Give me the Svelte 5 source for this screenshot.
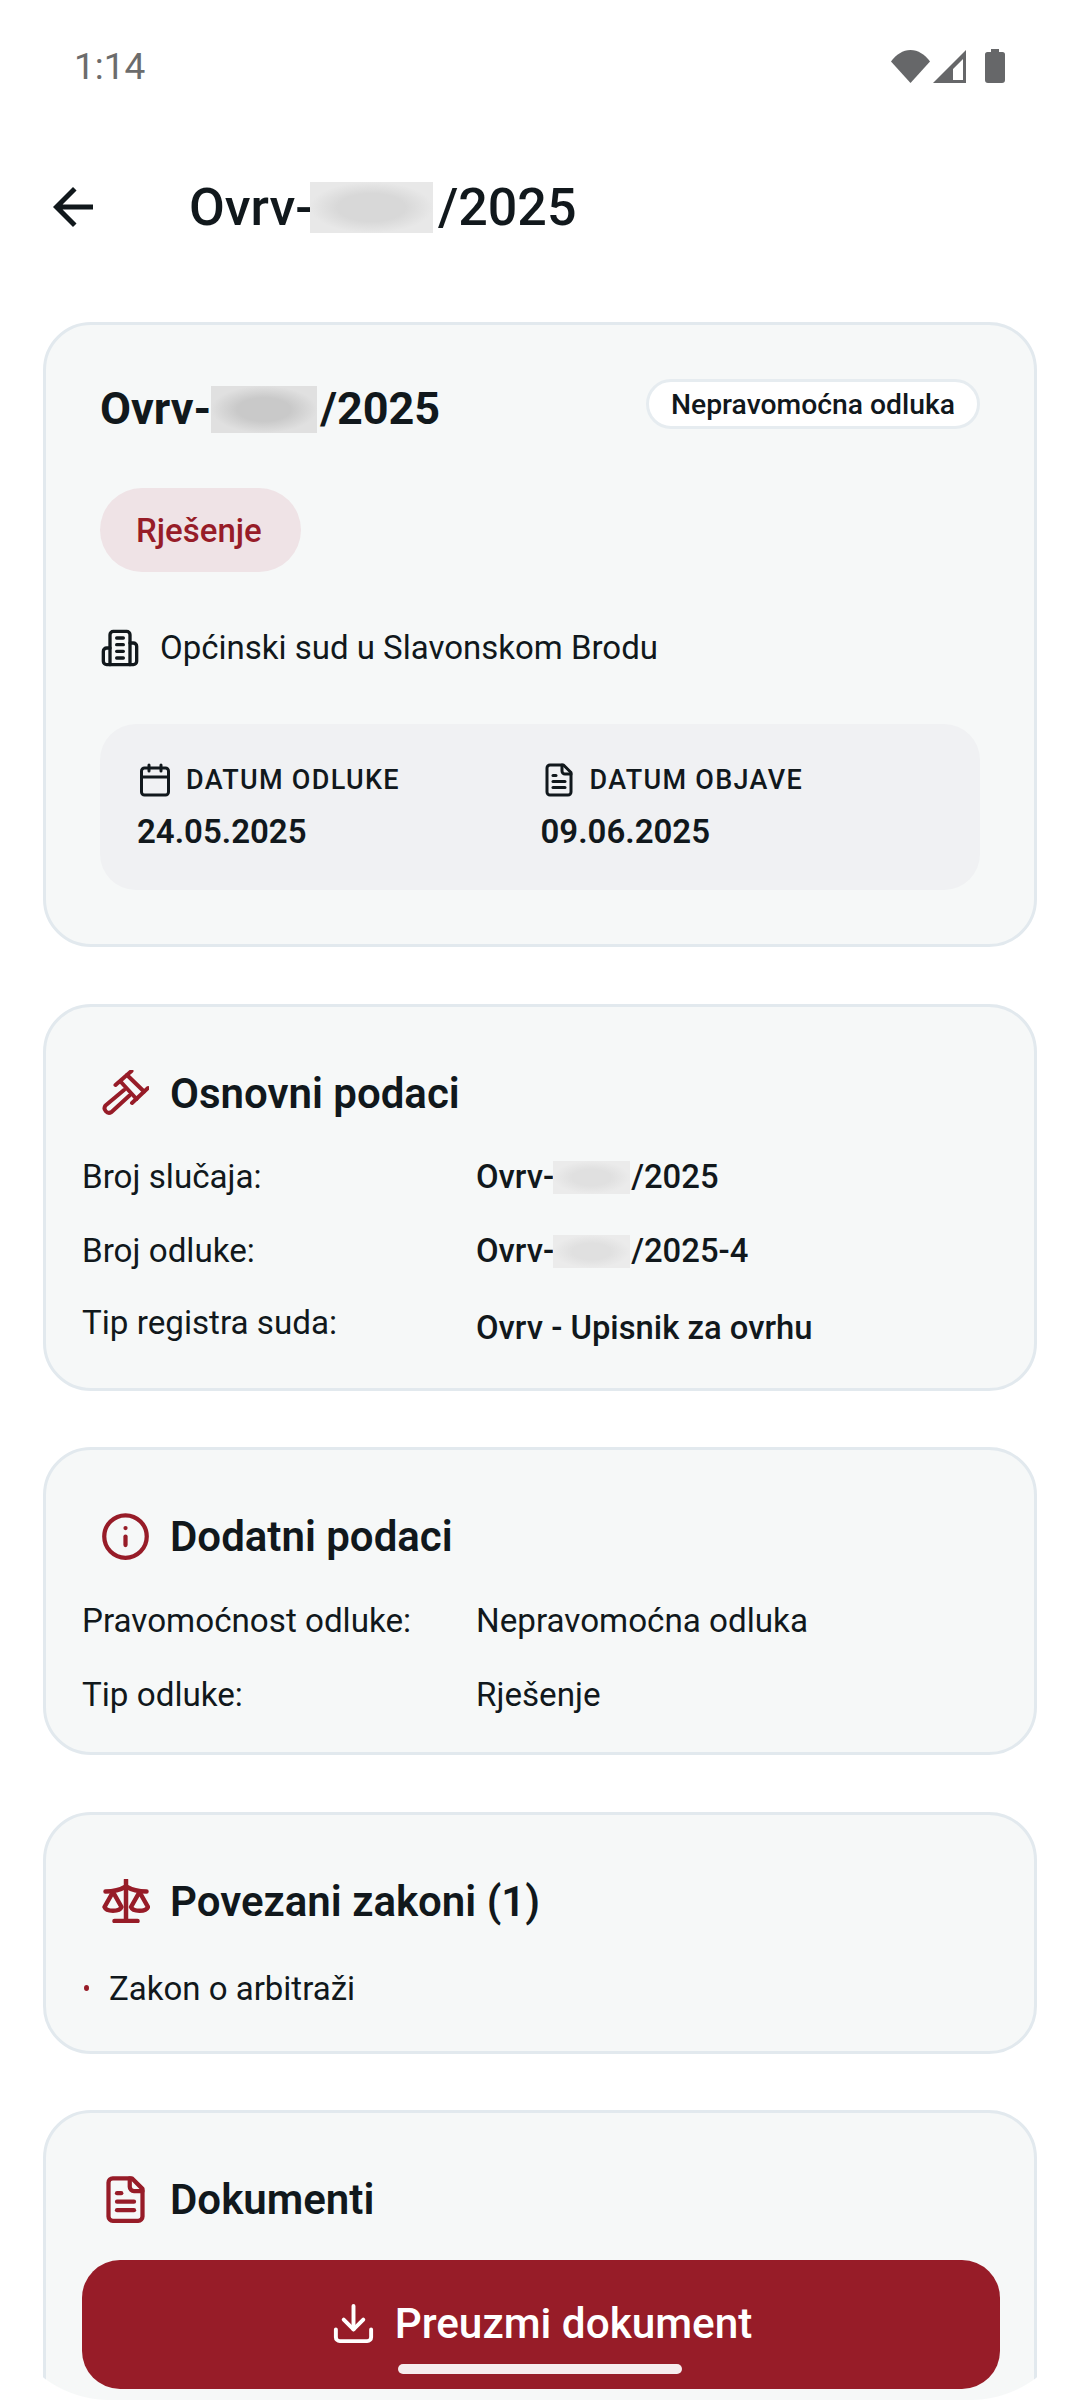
<script>
  const rowsA = [
    { label: 'Pravomoćnost odluke:', value: 'Nepravomoćna odluka' },
    { label: 'Tip odluke:', value: 'Rješenje' }
  ];
</script>

<div class="screen">
  <div class="status">
    <span class="time">1:14</span>
    <div class="sys">
      <svg class="wifi" viewBox="0 0 39 33"><path d="M0 11.5C5 4.5 12 0 19.5 0S34 4.500 39 11.500L19.500 33Z" /></svg>
      <svg class="signal" viewBox="0 0 33 33"><path fill-rule="evenodd" d="M33 0V33H0ZM30 9 20 19V30H30Z" /></svg>
      <svg class="battery" viewBox="0 0 20 34"><path d="M6 0H14V3H17.500A2.500 2.500 0 0 1 20 5.500V31A3 3 0 0 1 17 34H3A3 3 0 0 1 0 31V5.500A2.500 2.500 0 0 1 2.500 3H6Z" /></svg>
    </div>
  </div>

  <div class="appbar">
    <svg class="back" viewBox="0 0 24 24"><path d="M20 11H7.830l5.590-5.590L12 4l-8 8 8 8 1.410-1.410L7.830 13H20v-2z" /></svg>
    <h1 class="page-title">Ovrv-<span class="blur b-page"></span>/2025</h1>
  </div>

  <div class="list">
    <section class="card hero">
      <div class="hero-top">
        <h2 class="case">Ovrv-<span class="blur b-case"></span>/2025</h2>
        <span class="chip">Nepravomoćna odluka</span>
      </div>
      <span class="pill">Rješenje</span>
      <div class="court">
        <svg class="ic ic-court" viewBox="0 0 24 24"><path d="M6 22V4a2 2 0 0 1 2-2h8a2 2 0 0 1 2 2v18Z"/><path d="M6 12H4a2 2 0 0 0-2 2v6a2 2 0 0 0 2 2h2"/><path d="M18 9h2a2 2 0 0 1 2 2v9a2 2 0 0 1-2 2h-2"/><path d="M10 6h4"/><path d="M10 10h4"/><path d="M10 14h4"/><path d="M10 18h4"/></svg>
        <span class="court-name">Općinski sud u Slavonskom Brodu</span>
      </div>
      <div class="dates">
        <div>
          <div class="date-label">
            <svg class="ic ic-date" viewBox="0 0 24 24"><path d="M8 2v4"/><path d="M16 2v4"/><rect x="3" y="4" width="18" height="18" rx="2"/><path d="M3 10h18"/></svg>
            <span>DATUM ODLUKE</span>
          </div>
          <div class="date-value">24.05.2025</div>
        </div>
        <div>
          <div class="date-label">
            <svg class="ic ic-date" viewBox="0 0 24 24"><path d="M15 2H6a2 2 0 0 0-2 2v16a2 2 0 0 0 2 2h12a2 2 0 0 0 2-2V7Z"/><path d="M14 2v4a2 2 0 0 0 2 2h4"/><path d="M10 9H8"/><path d="M16 13H8"/><path d="M16 17H8"/></svg>
            <span>DATUM OBJAVE</span>
          </div>
          <div class="date-value">09.06.2025</div>
        </div>
      </div>
    </section>

    <section class="card">
      <div class="head">
        <svg class="head-ic gavel" viewBox="13 9 47 46"><path d="M26.500 24 42.500 10"/><path d="M43 42 59 27"/><path d="M38 14 55 30.500"/><path d="M31.500 20.500 47.500 38"/><path d="M35 29 16.500 44.500a4.500 4.500 0 0 0 6 6.500L40.500 34.500"/></svg>
        <h3>Osnovni podaci</h3>
      </div>
      <div class="rows">
        <div class="row">
          <span class="label">Broj slučaja:</span>
          <span class="value strong">Ovrv-<span class="blur b-row"></span>/2025</span>
        </div>
        <div class="row">
          <span class="label">Broj odluke:</span>
          <span class="value strong">Ovrv-<span class="blur b-row"></span>/2025-4</span>
        </div>
        <div class="row">
          <span class="label up">Tip registra suda:</span>
          <span class="value strong tall">Ovrv - Upisnik za ovrhu</span>
        </div>
      </div>
    </section>

    <section class="card">
      <div class="head">
        <svg class="head-ic" viewBox="0 0 24 24"><circle cx="12" cy="12" r="10"/><path d="M12 16v-4"/><path d="M12 8h.01"/></svg>
        <h3>Dodatni podaci</h3>
      </div>
      <div class="rows">
        {#each rowsA as r}
          <div class="row">
            <span class="label">{r.label}</span>
            <span class="value">{r.value}</span>
          </div>
        {/each}
      </div>
    </section>

    <section class="card">
      <div class="head">
        <svg class="head-ic scales" viewBox="12 9 48 44"><path d="M36 10V51"/><path d="M24.500 51H47.500"/><path d="M15.500 21.500C22 21.500 30 20 36 16.500C42 20 50 21.500 56.500 21.500"/><path d="M14.500 37 23 22 31.500 37C29.500 42 16.500 42 14.500 37Z"/><path d="M41 37 49.500 22 58 37C56 42 43 42 41 37Z"/></svg>
        <h3>Povezani zakoni (1)</h3>
      </div>
      <ul class="laws">
        <li><span class="dot"></span>Zakon o arbitraži</li>
      </ul>
    </section>

    <section class="card last">
      <div class="head">
        <svg class="head-ic" viewBox="0 0 24 24"><path d="M15 2H6a2 2 0 0 0-2 2v16a2 2 0 0 0 2 2h12a2 2 0 0 0 2-2V7Z"/><path d="M14 2v4a2 2 0 0 0 2 2h4"/><path d="M10 9H8"/><path d="M16 13H8"/><path d="M16 17H8"/></svg>
        <h3>Dokumenti</h3>
      </div>
    </section>
  </div>

  <button class="download">
    <svg class="dl-ic" viewBox="0 0 24 24"><path d="M21 15v4a2 2 0 0 1-2 2H5a2 2 0 0 1-2-2v-4"/><path d="m7 10 5 5 5-5"/><path d="M12 15V3"/></svg>
    <span>Preuzmi dokument</span>
  </button>
  <div class="home"></div>
  <div class="corner left"></div>
  <div class="corner right"></div>
</div>

<style>
  :global(body) {
    margin: 0;
    background: #fff;
  }
  .screen {
    position: relative;
    width: 1080px;
    height: 2400px;
    overflow: hidden;
    background: #fff;
    color: #11181c;
    font-family: Roboto, "Liberation Sans", sans-serif;
  }
  h1, h2, h3, ul {
    margin: 0;
    padding: 0;
  }

  .status {
    height: 132px;
    display: flex;
    align-items: center;
    justify-content: space-between;
    padding: 0 75px 0 74px;
    box-sizing: border-box;
  }
  .time {
    font-size: 37px;
    color: #6c6c6c;
  }
  .sys {
    display: flex;
    align-items: center;
    gap: 3px;
  }
  .sys svg {
    fill: #666769;
    display: block;
  }
  .wifi { width: 39px; height: 33px; }
  .signal { width: 33px; height: 33px; }
  .battery { width: 20px; height: 34px; margin-left: 16px; }

  .appbar {
    height: 150px;
    display: flex;
    align-items: center;
    padding-left: 43px;
    box-sizing: border-box;
  }
  .back {
    width: 60px;
    height: 60px;
    fill: #11181c;
    flex: none;
  }
  .page-title {
    margin-left: 86px;
    font-size: 52px;
    font-weight: 500;
    display: flex;
    align-items: center;
  }

  .blur {
    display: inline-block;
    flex: none;
  }
  .b-page {
    width: 123px;
    height: 51px;
    background: radial-gradient(closest-side, #d8d8d8 55%, #e8e8e8);
    margin-left: -3px;
    margin-right: 5px;
  }
  .b-case {
    width: 106px;
    height: 47px;
    background: radial-gradient(closest-side, #c9c9c9 50%, #e0e0e0);
    margin-right: 3px;
  }
  .b-row {
    width: 77px;
    height: 33px;
    background: radial-gradient(closest-side, #e0e0e0 50%, #ebebeb);
    margin-left: -1px;
    margin-right: 1px;
  }

  .list {
    display: flex;
    flex-direction: column;
    gap: 56.5px;
    padding: 40px 43px 0;
  }
  .card {
    background: #f6f8f8;
    border: 3px solid #e2e9ee;
    border-radius: 48px;
  }
  .hero {
    padding: 54px;
  }
  .last {
    height: 400px;
    flex: none;
  }

  .hero-top {
    display: flex;
    justify-content: space-between;
    align-items: flex-start;
  }
  .case {
    font-size: 45px;
    font-weight: 700;
    line-height: 56px;
    padding-top: 2px;
    display: flex;
    align-items: center;
  }
  .chip {
    height: 50px;
    box-sizing: border-box;
    padding: 0 22px;
    display: flex;
    align-items: center;
    background: #fff;
    border: 3px solid #e6ecf0;
    border-radius: 25px;
    font-size: 28.300px;
    font-weight: 500;
  }
  .pill {
    display: inline-flex;
    align-items: center;
    height: 84px;
    margin-top: 51px;
    padding: 0 39px 0 36px;
    border-radius: 42px;
    background: #efe3e6;
    color: #971c28;
    font-size: 33px;
    font-weight: 500;
  }
  .court {
    display: flex;
    align-items: center;
    gap: 20px;
    margin-top: 56px;
    height: 40px;
    font-size: 33px;
  }
  .court-name {
    padding-bottom: 2px;
  }
  .ic {
    fill: none;
    stroke: #11181c;
    stroke-width: 2;
    stroke-linecap: round;
    stroke-linejoin: round;
    flex: none;
  }
  .ic-court { width: 40px; height: 40px; }
  .ic-date { width: 36px; height: 36px; }

  .dates {
    display: grid;
    grid-template-columns: 1fr 1fr;
    margin-top: 56px;
    padding: 35.500px 36px 38.500px 37px;
    background: #f0f1f3;
    border-radius: 36px;
  }
  .date-label {
    display: flex;
    align-items: center;
    gap: 13px;
    height: 40px;
    font-size: 27px;
    font-weight: 500;
    letter-spacing: 1.300px;
  }
  .date-value {
    margin-top: 12px;
    line-height: 40px;
    font-size: 33px;
    font-weight: 600;
  }

  .head {
    display: flex;
    align-items: center;
    gap: 19px;
    height: 72px;
    margin-top: 50.500px;
    padding-left: 54px;
  }
  .head h3 {
    font-size: 42px;
    font-weight: 600;
  }
  .head-ic {
    width: 51px;
    height: 51px;
    fill: none;
    stroke: #971c28;
    stroke-width: 2;
    stroke-linecap: round;
    stroke-linejoin: round;
    flex: none;
  }
  .gavel {
    width: 47px;
    height: 46px;
    margin: 0 2px;
    stroke-width: 4;
  }
  .scales {
    width: 48px;
    height: 44px;
    margin: 0 1.500px;
    stroke-width: 4.500;
  }

  .rows {
    padding: 11px 36px 20.500px;
  }
  .row {
    display: grid;
    grid-template-columns: 394px 1fr;
    align-items: start;
    padding: 17px 0;
    font-size: 33.200px;
    line-height: 40px;
  }
  .label.up {
    margin-top: -2px;
  }
  .value {
    display: flex;
    align-items: center;
    height: 40px;
  }
  .strong {
    font-weight: 500;
    font-size: 32.800px;
  }
  .tall {
    height: 45px;
  }

  .laws {
    list-style: none;
    padding: 14px 36px 25.500px;
  }
  .laws li {
    display: flex;
    align-items: center;
    height: 74px;
    font-size: 33px;
  }
  .dot {
    width: 5px;
    height: 6px;
    border-radius: 50%;
    background: #971c28;
    margin: 0 20px 0 2px;
  }

  .download {
    position: absolute;
    left: 82px;
    top: 2260px;
    width: 918px;
    height: 129px;
    padding: 0 0 2px;
    border: 0;
    border-radius: 38px;
    background: #971c28;
    color: #fff;
    font-family: inherit;
    font-size: 42.300px;
    font-weight: 500;
    display: flex;
    align-items: center;
    justify-content: center;
    gap: 18px;
  }
  .dl-ic {
    width: 47px;
    height: 47px;
    fill: none;
    stroke: #fff;
    stroke-width: 2;
    stroke-linecap: round;
    stroke-linejoin: round;
  }
  .home {
    position: absolute;
    left: 398px;
    top: 2364px;
    width: 284px;
    height: 10px;
    border-radius: 5px;
    background: #f6ecee;
  }
  .corner {
    position: absolute;
    bottom: 0;
    width: 110px;
    height: 110px;
  }
  .corner.left {
    left: 0;
    background: radial-gradient(circle at 100% 0, transparent 109.500px, #fff 110.500px);
  }
  .corner.right {
    right: 0;
    background: radial-gradient(circle at 0 0, transparent 109.500px, #fff 110.500px);
  }
</style>
